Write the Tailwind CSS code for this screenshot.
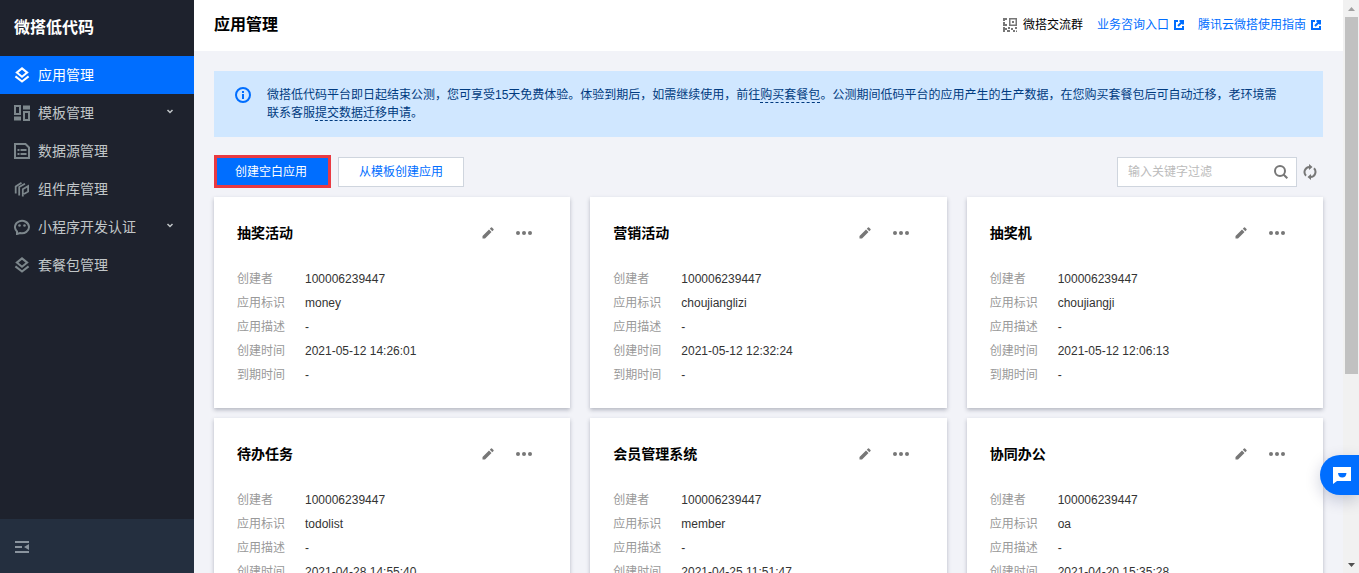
<!DOCTYPE html>
<html lang="zh-CN">
<head>
<meta charset="utf-8">
<meta name="viewport" content="width=device-width, initial-scale=1">
<title>应用管理</title>
<script src="https://cdn.jsdelivr.net/npm/@tailwindcss/browser@4"></script>
</head>
<body class="flex h-screen overflow-hidden bg-[#f2f3f8] font-['Liberation_Sans','Noto_Sans_CJK_SC',sans-serif] text-xs text-black">

<svg class="hidden" aria-hidden="true">
  <symbol id="layers" viewBox="0 0 16 16"><path d="M8 1.4 13.2 5.6 8 9.8 2.800 5.6Z M1.4 9.4 8 14.6 14.6 9.4" fill="none" stroke="currentColor" stroke-width="2"/></symbol>
  <symbol id="chevron" viewBox="0 0 8 8"><path d="M1.500 2 4 4.500 6.500 2" fill="none" stroke="currentColor" stroke-width="1.5"/></symbol>
  <symbol id="external" viewBox="0 0 10 10"><path d="M4 1H1V9H9V6M5.5 1H9V4.5M9 1 4 6" fill="none" stroke="currentColor" stroke-width="2"/></symbol>
  <symbol id="pencil" viewBox="0 0 12 12"><path d="M.5 11.5V9L7 2.5 9.5 5 3 11.500ZM7.800 1.700 9 .5Q9.500 0 10 .5L11.500 2Q12 2.500 11.500 3L10.300 4.200Z" fill="currentColor"/></symbol>
  <symbol id="dots" viewBox="0 0 16 4"><g fill="currentColor"><circle cx="2" cy="2" r="2"/><circle cx="8" cy="2" r="2"/><circle cx="14" cy="2" r="2"/></g></symbol>
</svg>

<aside class="flex w-[194px] shrink-0 flex-col bg-[#1e222d]">
  <div class="flex h-14 items-center px-3.5 text-base font-bold text-white">微搭低代码</div>
  <nav class="flex flex-1 flex-col text-sm text-[#c1c6c8]">
    <a href="#" class="flex h-[38px] items-center gap-2 bg-[#006eff] px-3.5 text-white" aria-current="page">
      <svg class="size-4"><use href="#layers"/></svg>应用管理</a>
    <a href="#" class="flex h-[38px] items-center gap-2 px-3.5">
      <svg class="size-4 text-[#7d878c]" viewBox="0 0 16 16" fill="none" stroke="currentColor" stroke-width="2"><path d="M1 1H6V9H1ZM10 7H15V15H10Z"/><path d="M9 2.500H16M0 13.500H7" stroke-width="4"/></svg>模板管理
      <svg class="mr-1.5 mb-0.5 ml-auto size-2"><use href="#chevron"/></svg></a>
    <a href="#" class="flex h-[38px] items-center gap-2 px-3.5">
      <svg class="size-4 text-[#7d878c]" viewBox="0 0 16 16" fill="none" stroke="currentColor" stroke-width="2"><path d="M1 1H11.500L15 4.500V15H1Z"/><path d="M3.500 7H5.500M6.500 7H12.500M3.500 11H5.500M6.500 11H12.500"/></svg>数据源管理</a>
    <a href="#" class="flex h-[38px] items-center gap-2 px-3.5">
      <svg class="size-4 text-[#7d878c]" viewBox="0 0 16 16" fill="none" stroke="currentColor" stroke-width="1.800"><path d="M1.700 12.500V5.600L7.500 1.800M5.200 14.500V6L11 2.800M8.800 15.500V8.200L14.100 5V10.600L10 13"/></svg>组件库管理</a>
    <a href="#" class="flex h-[38px] items-center gap-2 px-3.5">
      <svg class="size-4 text-[#7d878c]" viewBox="0 0 16 16"><path d="M3 15V12.400A7 6.200 0 1 1 6 14Z" fill="none" stroke="currentColor" stroke-width="2"/><circle cx="5.500" cy="6.500" r="1.300" fill="currentColor"/><circle cx="10.500" cy="6.500" r="1.300" fill="currentColor"/></svg>小程序开发认证
      <svg class="mr-1.5 mb-0.5 ml-auto size-2"><use href="#chevron"/></svg></a>
    <a href="#" class="flex h-[38px] items-center gap-2 px-3.5">
      <svg class="size-4 text-[#7d878c]"><use href="#layers"/></svg>套餐包管理</a>
  </nav>
  <div class="flex h-[54px] items-center bg-[#242f3f] px-[15px] pt-0.5">
    <button type="button" aria-label="收起菜单" class="text-[#8a949e]"><svg class="h-3 w-3.5" viewBox="0 0 14 12" fill="currentColor"><path d="M0 0H14V2H0ZM0 5H7V7H0ZM0 10H14V12H0ZM14 3V9L9 6Z"/></svg></button>
  </div>
</aside>

<div class="flex min-w-0 flex-1 flex-col">
  <header class="flex h-[51px] shrink-0 items-center justify-between bg-white pr-[22px] pb-0.5 pl-5">
    <h1 class="text-base font-bold">应用管理</h1>
    <div class="flex items-center gap-3.5 text-[#006eff]">
      <span class="flex items-center gap-1.5 text-black">
        <svg class="size-3.5 text-[#777]" viewBox="0 0 14 14" fill="currentColor"><path d="M0 0H4V2H2V3H0ZM0 4H2V6H4V8H0ZM6 0H14V8H6ZM7.500 1.500V6.500H12.500V1.500ZM9 3H11V5H9ZM0 9H2V10H4V12H2V14H0ZM5 9H7V11H5ZM8 10H10V12H8ZM12 9H14V11H12ZM4 12H7V14H4ZM10 12H12V14H10ZM13 12.500H14V14H13Z"/></svg>微搭交流群</span>
      <a href="#" class="flex items-center gap-[5px]">业务咨询入口<svg class="size-2.5"><use href="#external"/></svg></a>
      <a href="#" class="flex items-center gap-[5px]">腾讯云微搭使用指南<svg class="size-2.5"><use href="#external"/></svg></a>
    </div>
  </header>

  <main class="min-h-0 flex-1 overflow-hidden p-5">
    <div class="flex gap-4 bg-[#d0e7ff] pt-[15px] pr-10 pb-[15px] pl-[21px] text-[#003b80]">
      <svg class="mt-px size-4 shrink-0 text-[#006eff]" viewBox="0 0 16 16"><circle cx="8" cy="8" r="7" fill="none" stroke="currentColor" stroke-width="2"/><path d="M7 4H9V6H7ZM7 7H9V12H7Z" fill="currentColor"/></svg>
      <p class="leading-[18px]">微搭低代码平台即日起结束公测，您可享受15天免费体验。体验到期后，如需继续使用，前往<a href="#" class="border-b border-dashed border-[#003b80]">购买套餐包</a>。公测期间低码平台的应用产生的生产数据，在您购买套餐包后可自动迁移，老环境需联系客服<a href="#" class="border-b border-dashed border-[#003b80]">提交数据迁移申请</a>。</p>
    </div>

    <div class="mt-[18px] mb-[9px] flex items-center">
      <button type="button" class="h-[33px] border-3 border-[#e93a42] bg-[#006eff] pr-[21px] pl-[18px] text-white">创建空白应用</button>
      <button type="button" class="ml-[7px] h-[30px] border border-[#cfd5de] bg-white px-5 text-[#006eff]">从模板创建应用</button>
      <div class="ml-auto flex h-[30px] w-[180px] items-center border border-[#cfd5de] bg-white px-2">
        <input type="text" aria-label="输入关键字过滤" placeholder="输入关键字过滤" class="min-w-0 flex-1 px-0.5 outline-none placeholder:text-[#bbb]">
        <button type="button" aria-label="搜索" class="text-[#777]"><svg class="size-3.5" viewBox="0 0 14 14" fill="none" stroke="currentColor" stroke-width="2"><circle cx="6" cy="6" r="5"/><path d="M9.500 9.500 13.300 13.300"/></svg></button>
      </div>
      <button type="button" aria-label="刷新" class="mr-1.5 ml-1.5 text-[#777]"><svg class="h-4 w-3.5" viewBox="0 0 14 16"><path d="M3 11.700A5.200 5.200 0 0 1 6.500 2.900M11 4.300A5.200 5.200 0 0 1 7.500 13.100" fill="none" stroke="currentColor" stroke-width="2"/><path d="M6 0 9.500 3 6 6ZM8 10V16L4.500 13Z" fill="currentColor"/></svg></button>
    </div>

    <div id="apps" class="grid grid-cols-3 gap-x-5 gap-y-2.5"></div>
  </main>
</div>

<div class="flex w-4 shrink-0 flex-col items-center justify-between bg-[#f1f1f1] pb-1.5" aria-hidden="true">
  <svg class="mt-[7px] h-1 w-[7px] shrink-0 text-[#a0a0a0]" viewBox="0 0 7 4"><path d="M0 4 3.500 0 7 4Z" fill="currentColor"/></svg>
  <div class="mt-1.5 mb-auto h-[63%] w-[13px] bg-[#c1c1c1]"></div>
  <svg class="h-1 w-[7px] shrink-0 text-[#505050]" viewBox="0 0 7 4"><path d="M0 0H7L3.500 4Z" fill="currentColor"/></svg>
</div>

<button type="button" aria-label="在线咨询" class="fixed right-0 bottom-[78px] flex h-10 items-center rounded-l-full bg-[#006eff] pr-2 pl-[13px] text-white shadow-[0_5px_16px_rgba(0,20,80,0.2)]">
  <svg class="h-[17px] w-[18px]" viewBox="0 0 18 17"><path d="M0 0H18V14H4L0 17Z" fill="currentColor"/><path d="M5 6H13.500Q13 10.500 9.250 10.500T5 6Z" fill="#006eff"/></svg>
</button>

<script>
const apps = [
  ['抽奖活动', 'money', '2021-05-12 14:26:01'],
  ['营销活动', 'choujianglizi', '2021-05-12 12:32:24'],
  ['抽奖机', 'choujiangji', '2021-05-12 12:06:13'],
  ['待办任务', 'todolist', '2021-04-28 14:55:40'],
  ['会员管理系统', 'member', '2021-04-25 11:51:47'],
  ['协同办公', 'oa', '2021-04-20 15:35:28'],
];
document.getElementById('apps').innerHTML = apps.map(([name, key, created]) => `
  <article class="bg-white px-[23px] pt-6 pb-[21px] shadow-[0_2px_4px_rgba(54,58,80,0.32)]">
    <div class="flex h-6 items-center pr-[15px] text-[#777]">
      <h2 class="mr-auto text-sm font-bold text-black">${name}</h2>
      <button type="button" aria-label="编辑"><svg class="size-3"><use href="#pencil"/></svg></button>
      <button type="button" aria-label="更多" class="ml-[22px]"><svg class="h-1 w-4"><use href="#dots"/></svg></button>
    </div>
    <dl class="mt-[22px] grid grid-cols-[68px_1fr] leading-6 text-[#333]">
      ${[['创建者', '100006239447'], ['应用标识', key], ['应用描述', '-'], ['创建时间', created], ['到期时间', '-']]
        .map(([label, value]) => `<dt class="text-[#999]">${label}</dt><dd>${value}</dd>`).join('')}
    </dl>
  </article>`).join('');
</script>
</body>
</html>
